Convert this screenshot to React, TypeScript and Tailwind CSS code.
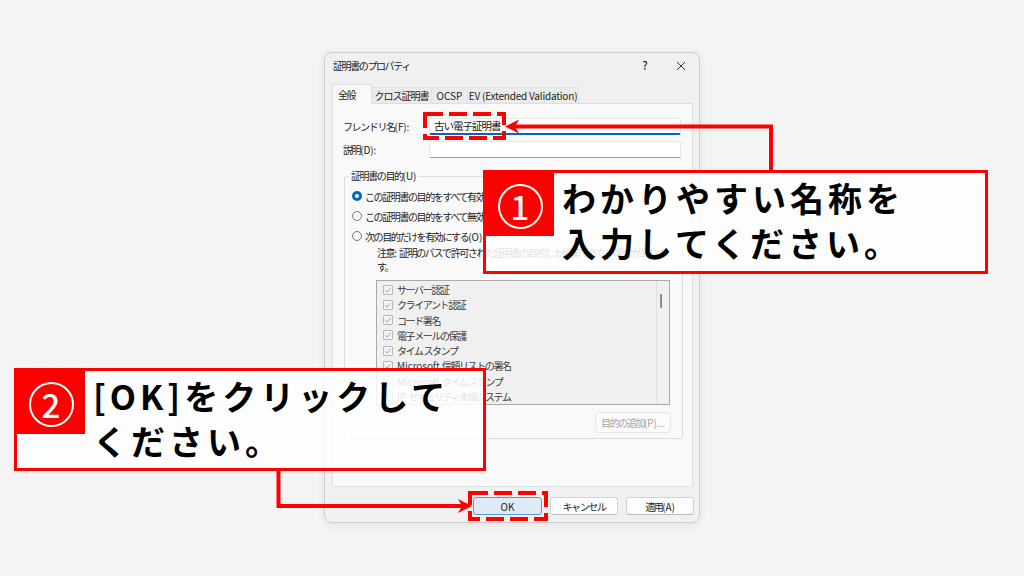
import React from "react";

function L({ children }: { children: React.ReactNode }) {
  return <span className="tracking-[-0.1px]">{children}</span>;
}

const items: React.ReactNode[] = [
  "サーバー認証",
  "クライアント認証",
  "コード署名",
  "電子メールの保護",
  "タイム スタンプ",
  <><L>Microsoft </L>信頼リストの署名</>,
  <><L>Microsoft </L>タイム スタンプ</>,
  <><L>IP </L>セキュリティ末端システム</>,
];

function Check() {
  return (
    <span className="w-[10px] h-[10px] shrink-0 border border-[#b8b8b8] bg-[#f4f4f4] rounded-[1px] flex items-center justify-center">
      <svg width="8" height="8" viewBox="0 0 8 8">
        <path d="M1.3 4.3 L3.1 6 L6.7 1.8" fill="none" stroke="#a3a3a3" strokeWidth="1" />
      </svg>
    </span>
  );
}

function Radio({ on }: { on?: boolean }) {
  return on ? (
    <span className="w-[10px] h-[10px] shrink-0 rounded-full bg-[#0067c0] flex items-center justify-center">
      <span className="w-[4px] h-[4px] rounded-full bg-white" />
    </span>
  ) : (
    <span className="w-[10px] h-[10px] shrink-0 rounded-full border border-[#7a7a7a] bg-[#f7f7f7]" />
  );
}

function Callout({ num, lines, cls }: { num: string; lines: string[]; cls: string }) {
  return (
    <div className={`absolute border-[3px] border-[#ff0000] bg-white/85 flex ${cls}`}>
      <div className="w-[68px] h-[63px] shrink-0 bg-[#ff0000] flex items-center justify-center">
        <div className="w-[45px] h-[45px] rounded-full border-[2px] border-white flex items-center justify-center text-white text-[33px] leading-none font-medium mt-[3px]">
          {num}
        </div>
      </div>
      <div className="pl-[8px] pt-[2px] text-[34px] leading-[45px] tracking-[4px] font-bold text-black whitespace-nowrap">
        {lines.map((l, i) => (
          <div key={i}>{l}</div>
        ))}
      </div>
    </div>
  );
}

export default function App() {
  return (
    <div className="relative w-[1024px] h-[576px] overflow-hidden bg-[#f4f4f4] font-['Noto_Sans_CJK_JP','Noto_Sans',sans-serif]">
      <div className="flex justify-center pt-[52px]">
        <div className="w-[376px] h-[471px] rounded-[8px] border border-[#cdcdcd] bg-[#f0f0f0] shadow-[0_2px_8px_rgba(0,0,0,0.08)] flex flex-col text-[10px] tracking-[-1.4px] text-[#1b1b1b]">
          {/* title bar */}
          <div className="h-[25px] flex items-center">
            <div className="flex-1 pl-[8px] text-[#222]">証明書のプロパティ</div>
            <div className="w-[36px] flex justify-center text-[11px] font-medium tracking-normal">?</div>
            <div className="w-[36px] flex justify-center">
              <svg width="10" height="10" viewBox="0 0 10 10">
                <path d="M1 1 L9 9 M9 1 L1 9" stroke="#333" strokeWidth="1" />
              </svg>
            </div>
          </div>
          {/* tabs */}
          <div className="mt-[6px] h-[19px] pl-[7px] flex items-end">
            <div className="relative z-10 w-[40px] h-[20px] -mb-px bg-[#f9f9f9] border-x border-t border-[#dedede] pl-[5px] flex items-center">
              全般
            </div>
            <div className="w-[60px] h-[16px] bg-[#ebebeb] border-t border-r border-[#e2e2e2] flex items-center justify-center tracking-[-1px]">
              クロス証明書
            </div>
            <div className="w-[36px] h-[16px] bg-[#ebebeb] border-t border-r border-[#e2e2e2] flex items-center justify-center tracking-normal">
              OCSP
            </div>
            <div className="w-[111px] h-[16px] bg-[#ebebeb] border-t border-r border-[#e2e2e2] flex items-center justify-center tracking-[-0.2px]">
              EV (Extended Validation)
            </div>
          </div>
          {/* panel */}
          <div className="ml-[7px] mr-[6px] h-[384px] border border-[#dedede] bg-[#f9f9f9] flex flex-col">
            <div className="mt-[14px] flex items-center">
              <div className="w-[96px] pl-[10px]">フレンドリ名<L>(F):</L></div>
              <div className="w-[252px] h-[17px] bg-white border border-[#e6e6e6] border-b-2 border-b-[#0067c0] rounded-[2px] pl-[4px] flex items-center text-[10.5px] tracking-[-1px] text-[#111]">
                古い電子証明書
              </div>
            </div>
            <div className="mt-[6px] flex items-center">
              <div className="w-[96px] pl-[10px]">説明<L>(D):</L></div>
              <div className="w-[252px] h-[17px] bg-white border border-[#e6e6e6] border-b-[#9a9a9a] rounded-[2px]" />
            </div>
            <fieldset className="mt-[11px] ml-[11px] mr-[9px] h-[270px] border border-[#dcdcdc] rounded-[3px] flex flex-col">
              <legend className="ml-[4px] px-[2px] leading-[14px]">証明書の目的<L>(U)</L></legend>
              <div className="mt-[3px] pl-[7px] h-[20px] flex items-center gap-[3px]">
                <Radio on />
                <span>この証明書の目的をすべて有効にする<L>(E)</L></span>
              </div>
              <div className="pl-[7px] h-[20px] flex items-center gap-[3px]">
                <Radio />
                <span>この証明書の目的をすべて無効にする<L>(S)</L></span>
              </div>
              <div className="pl-[7px] h-[20px] flex items-center gap-[3px]">
                <Radio />
                <span>次の目的だけを有効にする<L>(O)</L></span>
              </div>
              <div className="pl-[32px] leading-[14px] whitespace-nowrap text-[#222]">
                <div>注意<L>: </L>証明のパスで許可された証明書の目的しか編集できない場合がありま</div>
                <div>す。</div>
              </div>
              <div className="mt-[6px] ml-[31px] w-[294px] h-[125px] border border-[#a9a9a9] bg-[#f0f0f0] flex">
                <div className="flex-1 pt-[1px] pl-[6px] flex flex-col">
                  {items.map((t, i) => (
                    <div key={i} className="h-[15.25px] flex items-center gap-[4px] text-[#3a3a3a] whitespace-nowrap">
                      <Check />
                      <span>{t}</span>
                    </div>
                  ))}
                </div>
                <div className="w-[13px] border-l border-[#e0e0e0] flex flex-col">
                  <div className="mt-[13px] ml-[3px] w-[2px] h-[14px] rounded-full bg-[#8a8a8a]" />
                </div>
              </div>
              <div className="mt-[7px] self-end mr-[11px] w-[76px] h-[21px] rounded-[4px] border border-[#e6e6e6] bg-[#fbfbfb] flex items-center justify-center text-[#a3a3a3]">
                目的の追加<L>(P)...</L>
              </div>
            </fieldset>
          </div>
          {/* buttons */}
          <div className="mt-[10px] pr-[5px] flex justify-end gap-[8px]">
            <div className="w-[69px] h-[18px] rounded-[3px] border border-[#5a9bd8] bg-[#dfeaf7] flex items-center justify-center tracking-normal">
              OK
            </div>
            <div className="w-[68px] h-[18px] rounded-[3px] border border-[#d3d3d3] border-b-[#bdbdbd] bg-[#fdfdfd] flex items-center justify-center">
              キャンセル
            </div>
            <div className="w-[68px] h-[18px] rounded-[3px] border border-[#d3d3d3] border-b-[#bdbdbd] bg-[#fdfdfd] flex items-center justify-center">
              適用<L>(A)</L>
            </div>
          </div>
        </div>
      </div>

      {/* annotations: connectors and dashed boxes */}
      <svg className="absolute left-0 top-0 pointer-events-none" width="1024" height="576" viewBox="0 0 1024 576">
        <rect x="425" y="114" width="79" height="24" fill="none" stroke="#ff0000" strokeWidth="4" strokeDasharray="18 6" />
        <rect x="470" y="493" width="76" height="26" fill="none" stroke="#ff0000" strokeWidth="4" strokeDasharray="18 6" />
        <polyline points="771,172 771,126.5 514,126.5" fill="none" stroke="#ff0000" strokeWidth="4" />
        <polygon points="505,126.5 519,119.5 515,126.5 519,133.5" fill="#ff0000" />
        <polyline points="278.5,470 278.5,506 462,506" fill="none" stroke="#ff0000" strokeWidth="4" />
        <polygon points="472,506 458,499 462,506 458,513" fill="#ff0000" />
      </svg>

      <Callout num="1" lines={["わかりやすい名称を", "入力してください。"]} cls="left-[483px] top-[170px] w-[505px] h-[104px]" />
      <Callout num="2" lines={["[OK]をクリックして", "ください。"]} cls="left-[14px] top-[368px] w-[472px] h-[103px]" />
    </div>
  );
}
